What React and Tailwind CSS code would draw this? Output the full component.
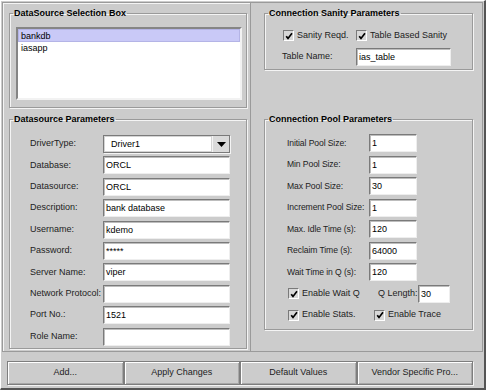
import React from "react";

const Group = ({ title, className, children }) => (
  <fieldset
    className={`border border-[#9a9a9a] shadow-[1px_1px_0_#f4f4f4,inset_1px_1px_0_#f4f4f4] ${className}`}
  >
    <legend className="ml-[3px] px-[1px] text-[9px] leading-[11px] font-bold text-black">
      {title}
    </legend>
    {children}
  </fieldset>
);

const Field = ({ value, className }) => (
  <div
    className={`h-[18px] bg-white border border-t-[#7a7a7a] border-l-[#7a7a7a] border-r-[#eeeeee] border-b-[#eeeeee] shadow-[inset_1px_1px_0_#bdbdbd] pl-[2px] text-[9px] leading-[17px] text-black overflow-hidden whitespace-nowrap ${className}`}
  >
    {value}
  </div>
);

const Check = ({ label, className }) => (
  <div className={`flex items-center h-[13px] ${className}`}>
    <span className="w-[11px] h-[11px] shrink-0 flex items-center justify-center bg-[#d8d8d8] border border-t-[#7a7a7a] border-l-[#7a7a7a] border-r-white border-b-white">
      <svg width="8" height="8" viewBox="0 0 8 8">
        <path d="M1.2 4.2 L3 6.4 L7 1.2" fill="none" stroke="#000" strokeWidth="1.7" />
      </svg>
    </span>
    <span className="ml-[3px] text-[#222]">{label}</span>
  </div>
);

const dsRows = [
  ["Database:", "ORCL"],
  ["Datasource:", "ORCL"],
  ["Description:", "bank database"],
  ["Username:", "kdemo"],
  ["Password:", "*****"],
  ["Server Name:", "viper"],
  ["Network Protocol:", ""],
  ["Port No.:", "1521"],
  ["Role Name:", ""],
];

const poolRows = [
  ["Initial Pool Size:", "1"],
  ["Min Pool Size:", "1"],
  ["Max Pool Size:", "30"],
  ["Increment Pool Size:", "1"],
  ["Max. Idle Time (s):", "120"],
  ["Reclaim Time (s):", "64000"],
  ["Wait Time in Q (s):", "120"],
];

const buttons = ["Add...", "Apply Changes", "Default Values", "Vendor Specific Pro..."];

export default function App() {
  return (
    <div className="w-[486px] h-[390px] bg-[#cccccc] border-t border-l border-t-white border-l-white border-r-2 border-b-2 border-r-[#555555] border-b-[#555555] p-[1px] font-['Liberation_Sans',Arial,sans-serif] text-[9px] text-[#222] flex flex-col">
      <div className="flex h-[350px]">
        {/* left panel */}
        <div className="w-[249px] h-full border border-[#9a9a9a] shadow-[inset_1px_1px_0_#f4f4f4]">
          <Group title="DataSource Selection Box" className="ml-[6px] mt-[5px] w-[238px] h-[100px]">
            <div className="ml-[6px] mt-[8px] w-[226px] h-[73px] bg-white border-2 border-t-[#858585] border-l-[#858585] border-r-[#f2f2f2] border-b-[#f2f2f2]">
              <div className="h-[13px] leading-[13px] pl-[2px] bg-[#c9c9f7] border border-[#b4b4e6] text-black">
                bankdb
              </div>
              <div className="h-[13px] leading-[13px] pl-[3px] text-black">iasapp</div>
            </div>
          </Group>

          <Group title="Datasource Parameters" className="ml-[6px] mt-[6px] w-[238px] h-[235px]">
            <div className="pl-[20px] mt-[10px] flex flex-col gap-[3.4px]">
              <div className="flex items-center h-[18px]">
                <span className="w-[73px]">DriverType:</span>
                <div className="w-[127px] h-[18px] flex border border-[#7a7a7a] shadow-[1px_1px_0_#f4f4f4]">
                  <div className="flex-1 bg-white border border-[#d4d4d4] pl-[6px] leading-[14px] text-black">
                    Driver1
                  </div>
                  <div className="w-[17px] bg-[#dadada] border-l border-[#f4f4f4] flex items-center justify-center">
                    <svg width="9" height="5" viewBox="0 0 9 5">
                      <path d="M0 0 H9 L4.5 5 Z" fill="#000" />
                    </svg>
                  </div>
                </div>
              </div>
              {dsRows.map(([label, value]) => (
                <div key={label} className="flex items-center h-[18px]">
                  <span className="w-[73px] whitespace-nowrap">{label}</span>
                  <Field value={value} className="w-[127px]" />
                </div>
              ))}
            </div>
          </Group>
        </div>

        {/* right panel */}
        <div className="flex-1 h-full border-y border-r border-[#9a9a9a]">
          <Group title="Connection Sanity Parameters" className="ml-[13px] mt-[5px] w-[209px] h-[62px]">
            <div className="flex mt-[10px] pl-[18px]">
              <Check label="Sanity Reqd." className="w-[73px]" />
              <Check label="Table Based Sanity" />
            </div>
            <div className="flex items-center mt-[6px] pl-[17px]">
              <span className="w-[74px]">Table Name:</span>
              <Field value="ias_table" className="w-[95px]" />
            </div>
          </Group>

          <Group title="Connection Pool Parameters" className="ml-[13px] mt-[44px] w-[209px] h-[216px]">
            <div className="pl-[22px] mt-[9px] flex flex-col gap-[3.5px]">
              {poolRows.map(([label, value]) => (
                <div key={label} className="flex items-center h-[18px]">
                  <span className="w-[82px] whitespace-nowrap text-[8.6px] tracking-[-0.1px]">{label}</span>
                  <Field value={value} className="w-[48px]" />
                </div>
              ))}
              <div className="flex items-center h-[18px]">
                <Check label="Enable Wait Q" className="w-[90px] ml-[1px]" />
                <span className="w-[40px]">Q Length:</span>
                <Field value="30" className="w-[32px]" />
              </div>
              <div className="flex items-center h-[18px]">
                <Check label="Enable Stats." className="w-[86px] ml-[1px]" />
                <Check label="Enable Trace" />
              </div>
            </div>
          </Group>
        </div>
      </div>

      {/* button bar */}
      <div className="pl-[5px] pt-[9px]">
        <div className="grid grid-cols-4 w-[466px] h-[24px]">
          {buttons.map((b) => (
            <div
              key={b}
              className="flex items-center justify-center border border-[#7e7e7e] shadow-[inset_1px_1px_0_#ffffff,inset_-1px_-1px_0_#a8a8a8,1px_1px_0_#f4f4f4] text-[#222]"
            >
              {b}
            </div>
          ))}
        </div>
      </div>
    </div>
  );
}
